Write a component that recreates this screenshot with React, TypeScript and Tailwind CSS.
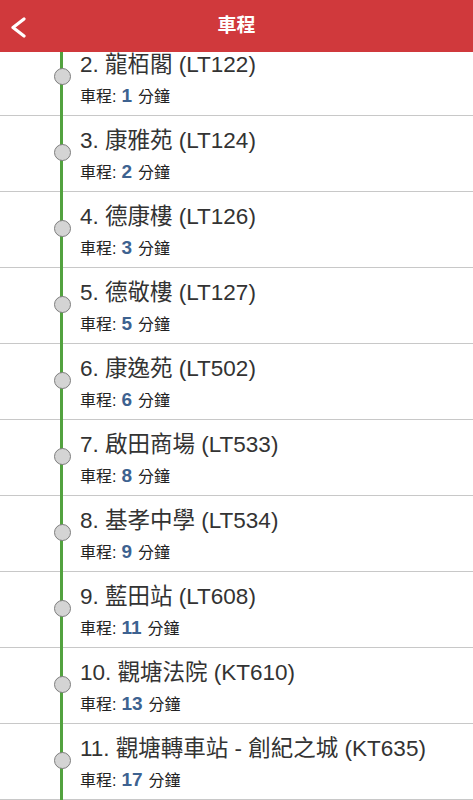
const stops = [
  { name: "2. 龍栢閣 (LT122)", mins: 1 },
  { name: "3. 康雅苑 (LT124)", mins: 2 },
  { name: "4. 德康樓 (LT126)", mins: 3 },
  { name: "5. 德敬樓 (LT127)", mins: 5 },
  { name: "6. 康逸苑 (LT502)", mins: 6 },
  { name: "7. 啟田商場 (LT533)", mins: 8 },
  { name: "8. 基孝中學 (LT534)", mins: 9 },
  { name: "9. 藍田站 (LT608)", mins: 11 },
  { name: "10. 觀塘法院 (KT610)", mins: 13 },
  { name: "11. 觀塘轉車站 - 創紀之城 (KT635)", mins: 17 },
];

const font = {
  fontFamily: '"Liberation Sans", "Noto Sans CJK TC", sans-serif',
};

export default function App() {
  return (
    <div className="w-[473px] h-[800px] overflow-hidden bg-white" style={font}>
      <div className="relative z-10 h-[52px] bg-[#d0393c] flex items-center justify-center">
        <svg
          className="absolute left-[9px] top-[17px]"
          width="18"
          height="21"
          viewBox="0 0 18 21"
          fill="none"
          stroke="white"
          strokeWidth="3.2"
          strokeLinecap="round"
          strokeLinejoin="round"
        >
          <path d="M15 2 L4 10.5 L15 19" />
        </svg>
        <span className="text-white text-[19px] font-bold">車程</span>
      </div>
      <div className="-mt-3">
        {stops.map((s, i) => (
          <div key={i} className="relative h-[76px] border-b border-[#c8c8c8]">
            <div className="absolute left-[60px] top-0 -bottom-px w-[3px] bg-[#52a23f] z-[1]" />
            <div className="absolute left-[54px] top-[28px] w-[17px] h-[17px] rounded-full bg-[#d4d4d4] border border-[#7e7e7e] z-[2]" />
            <div className="pl-[80px] pt-[11px]">
              <div className="text-[22.5px] leading-[28px] text-[#333] whitespace-nowrap">{s.name}</div>
              <div className="flex items-baseline text-[16px] leading-[22px] text-[#222] mt-[6px]">
                <span>車程:</span>
                <span className="ml-[5px] text-[19px] font-bold text-[#3d6290]">{s.mins}</span>
                <span className="ml-[6px]">分鐘</span>
              </div>
            </div>
          </div>
        ))}
      </div>
    </div>
  );
}
